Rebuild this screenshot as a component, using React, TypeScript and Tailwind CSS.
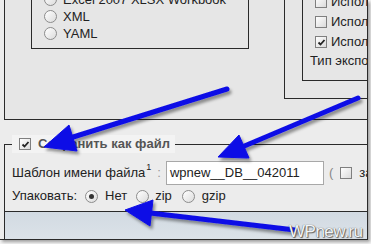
import type { ReactNode } from 'react';

function Radio({ checked = false }: { checked?: boolean }) {
  return (
    <span className="w-[13px] h-[13px] shrink-0 rounded-full border border-[#8c8c8c] bg-gradient-to-br from-white to-[#dcdcdc] flex items-center justify-center">
      {checked && <span className="w-[5px] h-[5px] rounded-full bg-[#333]"></span>}
    </span>
  );
}

function Checkbox({ checked = false }: { checked?: boolean }) {
  return (
    <span className="w-[12px] h-[12px] shrink-0 border border-[#7f7f7f] bg-gradient-to-br from-white to-[#dadada] flex items-center justify-center">
      {checked && (
        <svg width="9" height="9" viewBox="0 0 9 9">
          <path d="M1.5 4.5 L3.5 6.5 L7.5 2" fill="none" stroke="#222" strokeWidth="1.8" />
        </svg>
      )}
    </span>
  );
}

function RadioRow({ children }: { children: ReactNode }) {
  return (
    <div className="h-[17px] flex items-center gap-[6px] whitespace-nowrap">
      <Radio />
      <span>{children}</span>
    </div>
  );
}

export default function App() {
  return (
    <div className="w-[371px] h-[244px] relative overflow-hidden bg-[#f4f4f4] font-['Liberation_Sans',Arial,sans-serif] text-[13px] text-[#222]">
      <div className="w-[368px] h-[240px] border-r border-b border-[#2a2a2a] bg-[#ececec] shadow-[2px_2px_3px_rgba(0,0,0,0.35)] overflow-hidden flex flex-col">
        {/* export format block, cut at the top */}
        <div className="h-[120px] shrink-0 ml-[4px] border-l border-b border-[#2a2a2a] bg-[#e6e6e6] flex overflow-hidden">
          <div className="ml-[26px] w-[218px] h-[49px] shrink-0 border-l border-r border-b border-[#2a2a2a] overflow-hidden">
            <div className="-mt-[9px] pl-[12px]">
              <RadioRow>Excel 2007 XLSX Workbook</RadioRow>
              <RadioRow>XML</RadioRow>
              <RadioRow>YAML</RadioRow>
            </div>
          </div>
          <div className="ml-[35px] flex-1 h-[99px] border-l border-b border-[#2a2a2a] overflow-hidden">
            <div className="ml-[17px] h-[81px] border-l border-b border-[#2a2a2a] overflow-hidden">
              <div className="-mt-[8px] pl-[12px] whitespace-nowrap">
                <div className="h-[20px] flex items-center gap-[4px]">
                  <Checkbox />
                  <span>Использовать</span>
                </div>
                <div className="h-[20px] flex items-center gap-[4px]">
                  <Checkbox />
                  <span>Использовать</span>
                </div>
                <div className="h-[20px] flex items-center gap-[4px]">
                  <Checkbox checked />
                  <span>Использовать</span>
                </div>
                <div className="h-[18px] flex items-center -ml-[5px]">Тип экспорта</div>
              </div>
            </div>
          </div>
        </div>

        {/* save as file */}
        <fieldset className="ml-[4px] mt-[15px] flex-1 border-l border-t border-[#2a2a2a] flex flex-col">
          <legend className="ml-[7px] w-[163px] h-[18px] bg-[#f3f3f3] flex items-center gap-[7px] pl-[7px]">
            <Checkbox checked />
            <span className="font-bold text-[#555]">Сохранить как файл</span>
          </legend>

          <div className="mt-[8px] h-[24px] pl-[7px] flex items-center whitespace-nowrap">
            <span>Шаблон имени файла</span>
            <sup className="text-[9px] ml-[1px] -mt-[4px]">1</sup>
            <span className="ml-[6px] text-[#999]">:</span>
            <span className="ml-[5px] w-[158px] h-[24px] shrink-0 border border-[#a8a8a8] bg-white flex items-center pl-[3px]">
              wpnew__DB__042011
            </span>
            <span className="ml-[5px] text-[#888]">(</span>
            <span className="ml-[7px]">
              <Checkbox />
            </span>
            <span className="ml-[7px]">за</span>
          </div>

          <div className="mt-[2px] h-[18px] pl-[7px] flex items-center whitespace-nowrap">
            <span>Упаковать:</span>
            <span className="ml-[8px]">
              <Radio checked />
            </span>
            <span className="ml-[7px]">Нет</span>
            <span className="ml-[9px]">
              <Radio />
            </span>
            <span className="ml-[6px]">zip</span>
            <span className="ml-[10px]">
              <Radio />
            </span>
            <span className="ml-[7px]">gzip</span>
          </div>

          <div className="mt-[6px] flex-1 border-t border-[#2a2a2a] bg-gradient-to-b from-[#d2dae2] to-[#dbe2e8]"></div>
        </fieldset>
      </div>

      {/* annotation arrows drawn over the screenshot */}
      <svg className="absolute inset-0 pointer-events-none" width="371" height="244" viewBox="0 0 371 244">
        <defs>
          <filter id="arrowShadow" x="-20%" y="-20%" width="140%" height="140%">
            <feDropShadow dx="2" dy="3" stdDeviation="1.6" floodColor="#000" floodOpacity="0.4" />
          </filter>
        </defs>
        <g filter="url(#arrowShadow)" fill="#1010e6" stroke="#1010e6">
          <line x1="227" y1="89" x2="70" y2="138" strokeWidth="5" strokeLinecap="round" />
          <polygon points="44,147 77,151 69,125" strokeWidth="1" strokeLinejoin="round" />
          <line x1="358" y1="98" x2="242" y2="147" strokeWidth="5" strokeLinecap="round" />
          <polygon points="218,157 249,158 239,135" strokeWidth="1" strokeLinejoin="round" />
          <line x1="295" y1="230" x2="150" y2="213" strokeWidth="5" strokeLinecap="round" />
          <polygon points="125,210 150,226 153,200" strokeWidth="1" strokeLinejoin="round" />
        </g>
      </svg>

      <span className="absolute left-[289px] top-[219px] text-[17px] tracking-[-0.5px] text-[#f2f5f8] [text-shadow:0_0_1px_#444,1px_1px_1px_#666]">
        WPnew.ru
      </span>
    </div>
  );
}
